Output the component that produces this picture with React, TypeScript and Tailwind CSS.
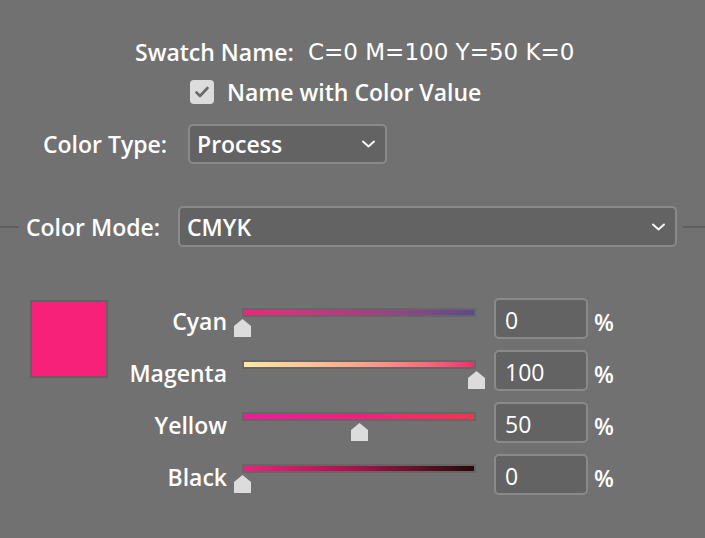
import React from "react";

interface Channel {
  name: string;
  value: number;
  bar: string;
}

const channels: Channel[] = [
  { name: "Cyan", value: 0, bar: "bg-linear-to-r from-[#f4207a] via-[#b03a80] to-[#5a4a8c]" },
  { name: "Magenta", value: 100, bar: "bg-linear-to-r from-[#fde8a4] via-[#f9a68c] to-[#f2286f]" },
  { name: "Yellow", value: 50, bar: "bg-linear-to-r from-[#ef1a9c] via-[#f31e7c] to-[#f8334b]" },
  { name: "Black", value: 0, bar: "bg-linear-to-r from-[#f0207a] via-[#a8104a] to-[#2a0808]" },
];

const Chevron = () => (
  <svg width="15" height="8" viewBox="0 0 15 8" fill="none">
    <polyline points="2,1.5 7.5,6.5 13,1.5" stroke="#f5f5f5" strokeWidth="2" strokeLinecap="round" strokeLinejoin="round" />
  </svg>
);

const Thumb = () => (
  <svg width="17" height="18" viewBox="0 0 17 18">
    <polygon points="8.5,0 17,7 17,18 0,18 0,7" fill="#dcdcdc" />
  </svg>
);

const SliderRow: React.FC<{ ch: Channel }> = ({ ch }) => (
  <div className="flex items-start h-[41px]">
    <div className="w-[119px] text-right leading-8 mt-[7px]">{ch.name}</div>
    <div className="relative w-[250px] ml-[7px] mt-[10px] h-[29px]">
      <div className="mx-[8px] h-[9px] border-2 border-[#666666]">
        <div className={`h-full ${ch.bar}`} />
      </div>
      <div className="absolute top-[11px]" style={{ left: `${(ch.value / 100) * 234}px` }}>
        <Thumb />
      </div>
    </div>
    <div className="ml-[10px] w-[94px] h-[41px] rounded-[5px] border-2 border-[#8a8a8a] bg-[#636363] flex items-center pl-[9px] pt-[3px] font-normal">
      {ch.value}
    </div>
    <div className="ml-[6px] leading-8 mt-[8px]">%</div>
  </div>
);

export default function App() {
  return (
    <div
      className="w-[705px] h-[538px] bg-[#717171] text-white text-[23px] font-semibold flex flex-col"
      style={{ fontFamily: '"Open Sans", "DejaVu Sans", sans-serif' }}
    >
      <div className="pt-[36px] pl-[135px] h-[68px] leading-8 whitespace-nowrap flex">
        <span className="w-[173px]">Swatch Name:</span>
        <span className="text-[23px] font-normal" style={{ fontFamily: '"DejaVu Sans", sans-serif' }}>
          C=0 M=100 Y=50 K=0
        </span>
      </div>

      <div className="mt-[8px] pl-[190px] h-8 flex items-center">
        <div className="w-6 h-6 rounded-[4px] bg-[#dcdcdc] flex items-center justify-center">
          <svg width="16" height="14" viewBox="0 0 16 14" fill="none">
            <polyline points="2.5,7.5 6,11 13.5,3" stroke="#6a6a6a" strokeWidth="2.6" strokeLinecap="round" strokeLinejoin="round" />
          </svg>
        </div>
        <span className="ml-[13px] leading-8">Name with Color Value</span>
      </div>

      <div className="mt-[16px] pl-[43px] h-[40px] flex items-center">
        <span className="w-[145px] leading-8">Color Type:</span>
        <div className="w-[199px] h-[40px] rounded-[5px] border-2 border-[#8a8a8a] bg-[#636363] flex items-center justify-between pl-[7px] pr-[9px]">
          <span className="leading-8">Process</span>
          <Chevron />
        </div>
      </div>

      <div className="mt-[42px] h-[41px] flex items-center">
        <div className="w-[19px] h-[2px] bg-[#5f5f5f]" />
        <span className="ml-[7px] w-[152px] leading-8">Color Mode:</span>
        <div className="w-[499px] h-[41px] rounded-[5px] border-2 border-[#8a8a8a] bg-[#636363] flex items-center justify-between pl-[7px] pr-[9px]">
          <span className="leading-8">CMYK</span>
          <Chevron />
        </div>
        <div className="ml-[6px] flex-1 h-[2px] bg-[#5f5f5f]" />
      </div>

      <div className="mt-[51px] flex">
        <div className="pl-[30px] pt-[2px]">
          <div className="w-[78px] h-[78px] border-2 border-[#626262] bg-[#f7217a]" />
        </div>
        <div className="flex flex-col gap-[11px]">
          {channels.map((ch) => (
            <SliderRow key={ch.name} ch={ch} />
          ))}
        </div>
      </div>
    </div>
  );
}
